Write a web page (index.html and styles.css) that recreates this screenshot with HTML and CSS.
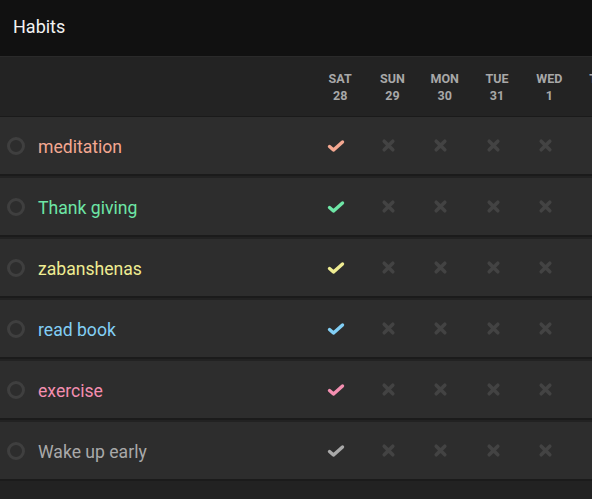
FILE: index.html
```html
<!DOCTYPE html>
<html>
<head>
<meta charset="utf-8">
<link rel="stylesheet" href="styles.css">
</head>
<body>
<div class="app">
  <div class="topbar">Habits</div>
  <div class="header">
    <div class="name-col"></div>
    <div class="day"><span>SAT</span><span>28</span></div>
    <div class="day"><span>SUN</span><span>29</span></div>
    <div class="day"><span>MON</span><span>30</span></div>
    <div class="day"><span>TUE</span><span>31</span></div>
    <div class="day"><span>WED</span><span>1</span></div>
    <div class="day"><span>THU</span><span>2</span></div>
  </div>
  <div class="list">
    <div class="row c-salmon"><div class="name-col"><span class="ring"></span><span class="label">meditation</span></div>
      <div class="cell"><svg class="check" viewBox="0 0 18 14"><polyline points="2.5,7.5 6.5,11 15.5,3"/></svg></div>
      <div class="cell"><svg class="x" viewBox="0 0 14 14"><path d="M3 3L11 11M11 3L3 11"/></svg></div>
      <div class="cell"><svg class="x" viewBox="0 0 14 14"><path d="M3 3L11 11M11 3L3 11"/></svg></div>
      <div class="cell"><svg class="x" viewBox="0 0 14 14"><path d="M3 3L11 11M11 3L3 11"/></svg></div>
      <div class="cell"><svg class="x" viewBox="0 0 14 14"><path d="M3 3L11 11M11 3L3 11"/></svg></div>
      <div class="cell"></div>
    </div>
    <div class="row c-green"><div class="name-col"><span class="ring"></span><span class="label">Thank giving</span></div>
      <div class="cell"><svg class="check" viewBox="0 0 18 14"><polyline points="2.5,7.5 6.5,11 15.5,3"/></svg></div>
      <div class="cell"><svg class="x" viewBox="0 0 14 14"><path d="M3 3L11 11M11 3L3 11"/></svg></div>
      <div class="cell"><svg class="x" viewBox="0 0 14 14"><path d="M3 3L11 11M11 3L3 11"/></svg></div>
      <div class="cell"><svg class="x" viewBox="0 0 14 14"><path d="M3 3L11 11M11 3L3 11"/></svg></div>
      <div class="cell"><svg class="x" viewBox="0 0 14 14"><path d="M3 3L11 11M11 3L3 11"/></svg></div>
      <div class="cell"></div>
    </div>
    <div class="row c-yellow"><div class="name-col"><span class="ring"></span><span class="label">zabanshenas</span></div>
      <div class="cell"><svg class="check" viewBox="0 0 18 14"><polyline points="2.5,7.5 6.5,11 15.5,3"/></svg></div>
      <div class="cell"><svg class="x" viewBox="0 0 14 14"><path d="M3 3L11 11M11 3L3 11"/></svg></div>
      <div class="cell"><svg class="x" viewBox="0 0 14 14"><path d="M3 3L11 11M11 3L3 11"/></svg></div>
      <div class="cell"><svg class="x" viewBox="0 0 14 14"><path d="M3 3L11 11M11 3L3 11"/></svg></div>
      <div class="cell"><svg class="x" viewBox="0 0 14 14"><path d="M3 3L11 11M11 3L3 11"/></svg></div>
      <div class="cell"></div>
    </div>
    <div class="row c-blue"><div class="name-col"><span class="ring"></span><span class="label">read book</span></div>
      <div class="cell"><svg class="check" viewBox="0 0 18 14"><polyline points="2.5,7.5 6.5,11 15.5,3"/></svg></div>
      <div class="cell"><svg class="x" viewBox="0 0 14 14"><path d="M3 3L11 11M11 3L3 11"/></svg></div>
      <div class="cell"><svg class="x" viewBox="0 0 14 14"><path d="M3 3L11 11M11 3L3 11"/></svg></div>
      <div class="cell"><svg class="x" viewBox="0 0 14 14"><path d="M3 3L11 11M11 3L3 11"/></svg></div>
      <div class="cell"><svg class="x" viewBox="0 0 14 14"><path d="M3 3L11 11M11 3L3 11"/></svg></div>
      <div class="cell"></div>
    </div>
    <div class="row c-pink"><div class="name-col"><span class="ring"></span><span class="label">exercise</span></div>
      <div class="cell"><svg class="check" viewBox="0 0 18 14"><polyline points="2.5,7.5 6.5,11 15.5,3"/></svg></div>
      <div class="cell"><svg class="x" viewBox="0 0 14 14"><path d="M3 3L11 11M11 3L3 11"/></svg></div>
      <div class="cell"><svg class="x" viewBox="0 0 14 14"><path d="M3 3L11 11M11 3L3 11"/></svg></div>
      <div class="cell"><svg class="x" viewBox="0 0 14 14"><path d="M3 3L11 11M11 3L3 11"/></svg></div>
      <div class="cell"><svg class="x" viewBox="0 0 14 14"><path d="M3 3L11 11M11 3L3 11"/></svg></div>
      <div class="cell"></div>
    </div>
    <div class="row c-gray"><div class="name-col"><span class="ring"></span><span class="label">Wake up early</span></div>
      <div class="cell"><svg class="check" viewBox="0 0 18 14"><polyline points="2.5,7.5 6.5,11 15.5,3"/></svg></div>
      <div class="cell"><svg class="x" viewBox="0 0 14 14"><path d="M3 3L11 11M11 3L3 11"/></svg></div>
      <div class="cell"><svg class="x" viewBox="0 0 14 14"><path d="M3 3L11 11M11 3L3 11"/></svg></div>
      <div class="cell"><svg class="x" viewBox="0 0 14 14"><path d="M3 3L11 11M11 3L3 11"/></svg></div>
      <div class="cell"><svg class="x" viewBox="0 0 14 14"><path d="M3 3L11 11M11 3L3 11"/></svg></div>
      <div class="cell"></div>
    </div>
  </div>
</div>
</body>
</html>
```
FILE: styles.css
```css
html, body {
  margin: 0;
  padding: 0;
  background: #222222;
  height: 100%;
  overflow: hidden;
}
body {
  font-family: Roboto, "Liberation Sans", sans-serif;
}
.app {
  width: 592px;
  overflow: hidden;
}
.topbar {
  height: 56px;
  background: #111111;
  color: #f2f2f2;
  font-size: 18px;
  padding-left: 13px;
  box-sizing: border-box;
  padding-bottom: 2px;
  line-height: 54px;
}
.header {
  display: flex;
  height: 61px;
  background: #232323;
  box-sizing: border-box;
  border-top: 1px solid #2a2a2a;
  border-bottom: 1px solid #1a1a1a;
  flex-wrap: nowrap;
}
.name-col {
  width: 314px;
  flex: 0 0 314px;
  display: flex;
  align-items: center;
}
.day {
  flex: 0 0 52.3px;
  display: flex;
  flex-direction: column;
  align-items: center;
  justify-content: center;
  color: #a8a8a8;
  font-weight: bold;
  font-size: 12.5px;
  line-height: 17px;
  padding-top: 1px;
  box-sizing: border-box;
}
.list {
  display: flex;
  flex-direction: column;
}
.row {
  display: flex;
  height: 57px;
  background: #2d2d2d;
  border-bottom: 2px solid #1b1b1b;
  margin-bottom: 2px;
  box-sizing: content-box;
}
.ring {
  width: 12px;
  height: 12px;
  border: 3px solid #3f3f3f;
  border-radius: 50%;
  margin-left: 7px;
  margin-right: 13px;
  flex: 0 0 auto;
}
.label {
  font-size: 17.6px;
  padding-top: 3px;
}
.cell {
  flex: 0 0 52.3px;
  display: flex;
  align-items: center;
  justify-content: center;
}
.check {
  width: 18px;
  height: 14px;
  fill: none;
  stroke-width: 3.4;
  stroke-linecap: round;
  stroke-linejoin: round;
  margin-right: 8px;
}
.x {
  width: 15px;
  height: 15px;
  fill: none;
  stroke: #434343;
  stroke-width: 3.4;
  stroke-linecap: round;
  margin-right: 8px;
}
.c-salmon .label { color: #f4a891; }
.c-salmon .check { stroke: #f4a891; }
.c-green .label { color: #6ee6a6; }
.c-green .check { stroke: #6ee6a6; }
.c-yellow .label { color: #efec92; }
.c-yellow .check { stroke: #efec92; }
.c-blue .label { color: #82cff5; }
.c-blue .check { stroke: #82cff5; }
.c-pink .label { color: #f48fb1; }
.c-pink .check { stroke: #f48fb1; }
.c-gray .label { color: #a9a9a9; }
.c-gray .check { stroke: #a9a9a9; }
```
